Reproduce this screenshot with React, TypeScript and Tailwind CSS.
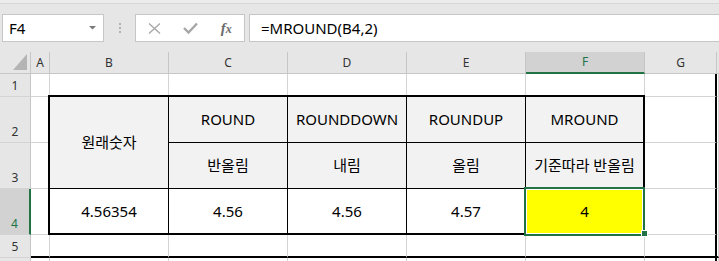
import React from "react";

const FONT = { fontFamily: '"Noto Sans", "Noto Sans CJK KR", sans-serif' };

const colHeaders: { label: string; w: string; sel?: boolean }[] = [
  { label: "A", w: "w-[19px]" },
  { label: "B", w: "w-[119px]" },
  { label: "C", w: "w-[119px]" },
  { label: "D", w: "w-[119px]" },
  { label: "E", w: "w-[119px]" },
  { label: "F", w: "w-[119px]", sel: true },
  { label: "G", w: "w-[72px]" },
];

function Cell({ children, className = "" }: { children?: React.ReactNode; className?: string }) {
  return (
    <div className={`flex items-center justify-center text-[15px] text-black ${className}`}>{children}</div>
  );
}

export default function App() {
  const rows = [1, 2, 3, 4, 5, 6];
  const bodyCells: React.ReactNode[] = [];
  rows.forEach((r) => {
    const selRow = r === 4;
    bodyCells.push(
      <div
        key={`rh${r}`}
        style={{ gridRow: r, gridColumn: 1 }}
        className={
          selRow
            ? "flex items-end justify-center pb-[2px] text-[12px] leading-[16px] text-[#217346] bg-[#d2d2d2] border-b border-[#d4d4d4] border-r-2 border-r-[#217346]"
            : "flex items-end justify-center pb-[2px] text-[12px] leading-[16px] text-[#333] bg-[#e6e6e6] border-b border-[#d4d4d4] border-r border-r-[#c6c6c6]"
        }
      >
        {r <= 5 ? r : ""}
      </div>
    );
    for (let c = 2; c <= 9; c++) {
      if (r >= 2 && r <= 4 && c >= 3 && c <= 7) continue;
      const isG = c === 8;
      const isR5 = r === 5;
      let cls = "border-r border-b border-[#d4d4d4]";
      if (isG && isR5) cls = "border-r-2 border-b-2 border-black";
      else if (isG) cls = "border-r-2 border-b border-[#d4d4d4] border-r-black";
      else if (isR5) cls = "border-r border-b-2 border-[#d4d4d4] border-b-black";
      bodyCells.push(<div key={`c${r}-${c}`} style={{ gridRow: r, gridColumn: c }} className={`bg-white ${cls}`} />);
    }
  });

  return (
    <div className="w-[719px] h-[261px] overflow-hidden bg-white flex flex-col" style={FONT}>
      {/* top strip */}
      <div className="h-[3px] bg-[#ececec] border-b border-[#d6d6d6] shrink-0" style={{ height: 4 }} />
      {/* formula bar */}
      <div className="h-[48px] bg-[#e6e6e6] pt-[10px] flex items-start shrink-0">
        <div className="ml-[2px] w-[102px] h-[28px] bg-white border border-[#c6c6c6] flex items-center pl-[6px] pr-[5px]">
          <span className="text-[15px] text-black flex-1">F4</span>
          <svg width="8" height="4" viewBox="0 0 8 4" className="mr-[1px]">
            <path d="M0 0 L7 0 L3.5 3.5 Z" fill="#7a7a7a" />
          </svg>
        </div>
        <div className="w-[31px] h-[28px] flex flex-col items-center justify-center gap-[2px]">
          <div className="w-[2px] h-[2px] bg-[#b0b0b0]" />
          <div className="w-[2px] h-[2px] bg-[#b0b0b0]" />
          <div className="w-[2px] h-[2px] bg-[#b0b0b0]" />
        </div>
        <div className="w-[110px] h-[28px] bg-white border border-[#c6c6c6] flex items-center">
          <div className="w-[36px] flex justify-center ml-[1px]">
            <svg width="13" height="11" viewBox="0 0 13 11">
              <path d="M1 0.5 L12 10.5 M12 0.5 L1 10.5" stroke="#a6a6a6" strokeWidth="1.3" />
            </svg>
          </div>
          <div className="w-[36px] flex justify-center">
            <svg width="15" height="12" viewBox="0 0 15 12">
              <path d="M1 6 L5.5 10.5 L14 1.5" stroke="#a6a6a6" strokeWidth="2.4" fill="none" />
            </svg>
          </div>
          <div className="w-[36px] flex justify-center">
            <span
              className="text-[15px] italic font-bold text-[#6b6b6b] leading-none"
              style={{ fontFamily: '"Liberation Serif", serif' }}
            >
              f<span className="text-[12px]">x</span>
            </span>
          </div>
        </div>
        <div className="ml-[4px] flex-1 h-[28px] bg-white border border-r-0 border-[#c6c6c6] flex items-center pl-[11px]">
          <span className="text-[15px] text-black">=MROUND(B4,2)</span>
        </div>
      </div>
      {/* column headers */}
      <div className="flex h-[22px] bg-[#e6e6e6] shrink-0">
        <div className="w-[31px] h-[22px] border-r border-b border-[#c6c6c6] flex items-end justify-end pr-[3px] pb-[3px]">
          <svg width="14" height="16" viewBox="0 0 14 16">
            <path d="M14 0 L14 16 L0 16 Z" fill="#b4b4b4" />
          </svg>
        </div>
        {colHeaders.map((h) => (
          <div
            key={h.label}
            className={
              h.sel
                ? `${h.w} h-[22px] flex items-center justify-center text-[12px] text-[#217346] bg-[#d2d2d2] border-r border-[#c6c6c6] border-b-2 border-b-[#217346]`
                : `${h.w} h-[22px] flex items-center justify-center text-[12px] text-[#333] border-r border-b border-[#c6c6c6]`
            }
          >
            {h.label}
          </div>
        ))}
        <div className="flex-1 h-[22px] border-b border-[#c6c6c6]" />
      </div>
      {/* body */}
      <div className="relative grid grid-cols-[31px_19px_119px_119px_119px_119px_119px_72px_1fr] grid-rows-[23px_46px_46px_46px_23px_20px]">
        {bodyCells}
        <div className="row-start-2 row-span-3 col-start-3 col-span-5 -ml-[2px] -mt-[2px] border-2 border-black bg-black grid grid-cols-[118px_118px_118px_118px_117px] grid-rows-[45px_45px_44px] gap-px">
          <Cell className="row-span-2 bg-[#f2f2f2]">원래숫자</Cell>
          <Cell className="bg-[#f2f2f2]">ROUND</Cell>
          <Cell className="bg-[#f2f2f2]">ROUNDDOWN</Cell>
          <Cell className="bg-[#f2f2f2]">ROUNDUP</Cell>
          <Cell className="bg-[#f2f2f2]">MROUND</Cell>
          <Cell className="bg-[#f2f2f2]">반올림</Cell>
          <Cell className="bg-[#f2f2f2]">내림</Cell>
          <Cell className="bg-[#f2f2f2]">올림</Cell>
          <Cell className="bg-[#f2f2f2]">기준따라 반올림</Cell>
          <Cell className="bg-white">4.56354</Cell>
          <Cell className="bg-white">4.56</Cell>
          <Cell className="bg-white">4.56</Cell>
          <Cell className="bg-white">4.57</Cell>
          <Cell className="bg-[#ffff00]">4</Cell>
        </div>
        {/* selection overlay */}
        <div className="absolute left-[524px] top-[113px] w-[121px] h-[49px] border-2 border-[#217346] shadow-[inset_0_0_0_1px_#ffffff] pointer-events-none" />
        <div className="absolute left-[641px] top-[156px] w-[7px] h-[7px] bg-[#217346] border border-white" />
      </div>
    </div>
  );
}
